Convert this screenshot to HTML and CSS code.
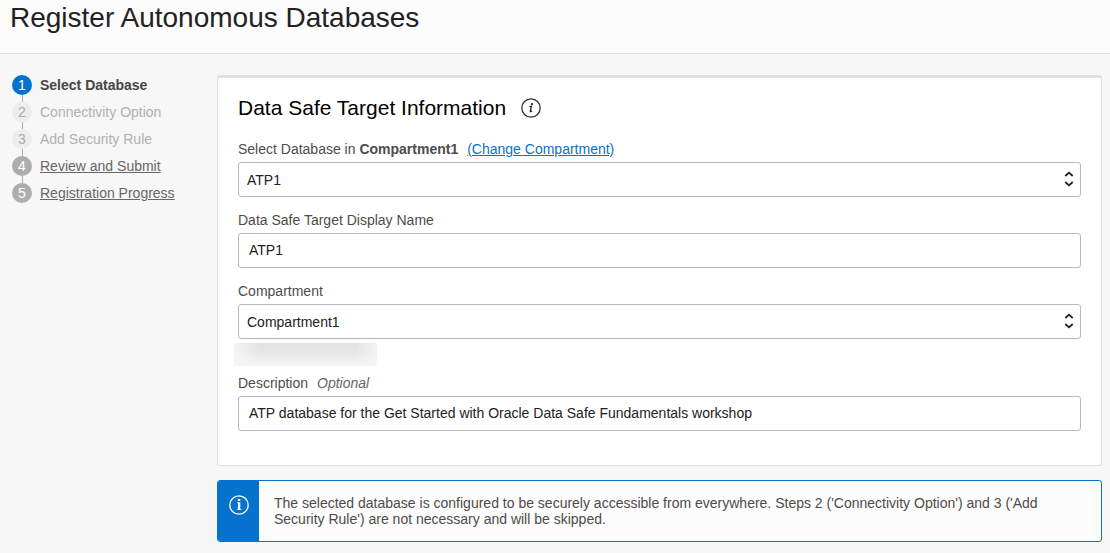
FILE: index.html
```html
<!DOCTYPE html>
<html lang="en">
<head>
<meta charset="utf-8">
<title>Register Autonomous Databases</title>
<link rel="stylesheet" href="styles.css">
</head>
<body>
<header class="page-header">
  <h1 class="page-title">Register Autonomous Databases</h1>
</header>
<div class="layout">
  <nav class="wizard" aria-label="Steps">
    <ol class="steps">
      <li class="step current"><span class="badge">1</span><span class="step-name">Select Database</span></li>
      <li class="step disabled"><span class="badge">2</span><span class="step-name">Connectivity Option</span></li>
      <li class="step disabled"><span class="badge">3</span><span class="step-name">Add Security Rule</span></li>
      <li class="step"><span class="badge">4</span><a class="step-name" href="#review">Review and Submit</a></li>
      <li class="step"><span class="badge">5</span><a class="step-name" href="#progress">Registration Progress</a></li>
    </ol>
  </nav>
  <main class="content">
    <form class="card">
      <h2 class="card-title">Data Safe Target Information
        <svg class="info" viewBox="0 0 20 20" aria-hidden="true">
          <circle cx="10" cy="10" r="9.2" fill="none" stroke="#333" stroke-width="1.3"/>
          <circle cx="10.9" cy="6.1" r="1.1" fill="#222"/>
          <path d="M8.4 8.7 L10.4 8.4 L9.3 13 Q9.2 13.9 9.9 13.6 L11 12.7" fill="none" stroke="#222" stroke-width="1.3"/>
        </svg>
      </h2>
      <div class="field">
        <div class="label-row">
          <label for="database">Select Database in <strong>Compartment1</strong></label>
          <a class="link" href="#change">(Change Compartment)</a>
        </div>
        <div class="select-box">
          <select id="database" class="control select"><option>ATP1</option></select>
          <svg class="arrows" viewBox="0 0 10 16" aria-hidden="true"><path d="M1.3 5 L5 1.6 L8.7 5 M1.3 11 L5 14.4 L8.7 11"/></svg>
        </div>
      </div>
      <div class="field">
        <label for="display-name">Data Safe Target Display Name</label>
        <input id="display-name" class="control" type="text" value="ATP1">
      </div>
      <div class="field">
        <label for="compartment">Compartment</label>
        <div class="select-box">
          <select id="compartment" class="control select"><option>Compartment1</option></select>
          <svg class="arrows" viewBox="0 0 10 16" aria-hidden="true"><path d="M1.3 5 L5 1.6 L8.7 5 M1.3 11 L5 14.4 L8.7 11"/></svg>
        </div>
      </div>
      <div class="redacted"></div>
      <div class="field">
        <div class="label-row">
          <label for="description">Description</label>
          <em class="optional">Optional</em>
        </div>
        <input id="description" class="control" type="text" value="ATP database for the Get Started with Oracle Data Safe Fundamentals workshop">
      </div>
    </form>
    <div class="notice" role="note">
      <div class="notice-side">
        <svg class="notice-icon" viewBox="0 0 20 20" aria-hidden="true">
          <circle cx="10" cy="10" r="9.2" fill="none" stroke="#fff" stroke-width="1.3"/>
          <path d="M8.8 4h2.5v2H8.8z M8 7.2h3.3v7h.9V15H8v-.8h.9V8H8z" fill="#fff"/>
        </svg>
      </div>
      <p class="notice-text">The selected database is configured to be securely accessible from everywhere. Steps 2 ('Connectivity Option') and 3 ('Add Security Rule') are not necessary and will be skipped.</p>
    </div>
  </main>
</div>
</body>
</html>
```
FILE: styles.css
```css
* { box-sizing: border-box; }
body {
  margin: 0;
  background: #f7f7f7;
  color: #4f4b48;
  font-family: "Liberation Sans", Arial, sans-serif;
  font-size: 14px;
  line-height: 16px;
}
.page-header {
  padding: 2px 10px 19px;
  background: #fcfcfc;
  border-bottom: 1px solid #e4e4e4;
}
.page-title {
  margin: 0;
  color: #222;
  font-size: 28px;
  font-weight: 400;
  line-height: 32px;
}
.layout {
  display: grid;
  grid-template-columns: 205px 1fr;
  padding: 21px 8px 11px 12px;
}
.steps {
  display: flex;
  flex-direction: column;
  gap: 7px;
  margin: 0;
  padding: 0;
  list-style: none;
}
.step {
  position: relative;
  display: flex;
  align-items: center;
  gap: 8px;
  height: 20px;
}
.step:not(:last-child)::after {
  content: "";
  position: absolute;
  top: 20px;
  left: 10px;
  width: 1px;
  height: 7px;
  background: #aaa;
}
.badge {
  width: 20px;
  height: 20px;
  border-radius: 50%;
  background: #adadad;
  color: #fff;
  line-height: 20px;
  text-align: center;
}
.step-name { color: #666; }
.current .badge { background: #0572ce; }
.current .step-name { color: #4a4541; font-weight: 700; }
.disabled .badge { background: #ededed; color: #aaa; }
.disabled .step-name { color: #b0b0b0; }
.content {
  display: flex;
  flex-direction: column;
  gap: 14px;
  min-width: 0;
}
.card {
  display: flex;
  flex-direction: column;
  gap: 15px;
  padding: 17px 20px 34px;
  background: #fff;
  border: 1px solid #e0e0e0;
  border-top: 3px solid #e1e1e5;
  border-radius: 3px;
}
.card-title {
  display: flex;
  align-items: center;
  gap: 15px;
  margin: 0 0 5px;
  color: #000;
  font-size: 21px;
  font-weight: 400;
  line-height: 26px;
}
.info, .notice-icon { width: 20px; height: 20px; }
.field {
  display: flex;
  flex-direction: column;
  gap: 5px;
}
.label-row { display: flex; gap: 9px; }
.optional { color: #666; }
.link { color: #0572ce; }
.select-box { display: grid; position: relative; }
.control {
  width: 100%;
  height: 35px;
  padding: 0 10px 2px;
  background: #fff;
  border: 1px solid #b3b8c2;
  border-radius: 3px;
  color: #222;
  font: inherit;
}
.select { padding: 0 28px 0 8px; appearance: none; }
.arrows {
  position: absolute;
  top: 9px;
  right: 7px;
  width: 10px;
  height: 16px;
  fill: none;
  stroke: #222;
  stroke-width: 1.8;
  pointer-events: none;
}
.redacted {
  width: 143px;
  height: 23px;
  margin: -11px 0 -6px -4px;
  background:
    linear-gradient(to right, #f4f4f4, rgb(244 244 244 / 0) 18%, rgb(244 244 244 / 0) 85%, #f4f4f4),
    linear-gradient(#e3e3e3, #e5e5e5 35%, #f6f6f6);
}
.notice {
  display: flex;
  overflow: hidden;
  background: #fcfcfc;
  border: 1px solid #0572ce;
  border-radius: 3px;
}
.notice-side {
  flex: none;
  width: 41px;
  padding: 14px 11px;
  background: #0572ce;
}
.notice-text {
  margin: 0;
  padding: 14px 40px 14px 15px;
}
```
